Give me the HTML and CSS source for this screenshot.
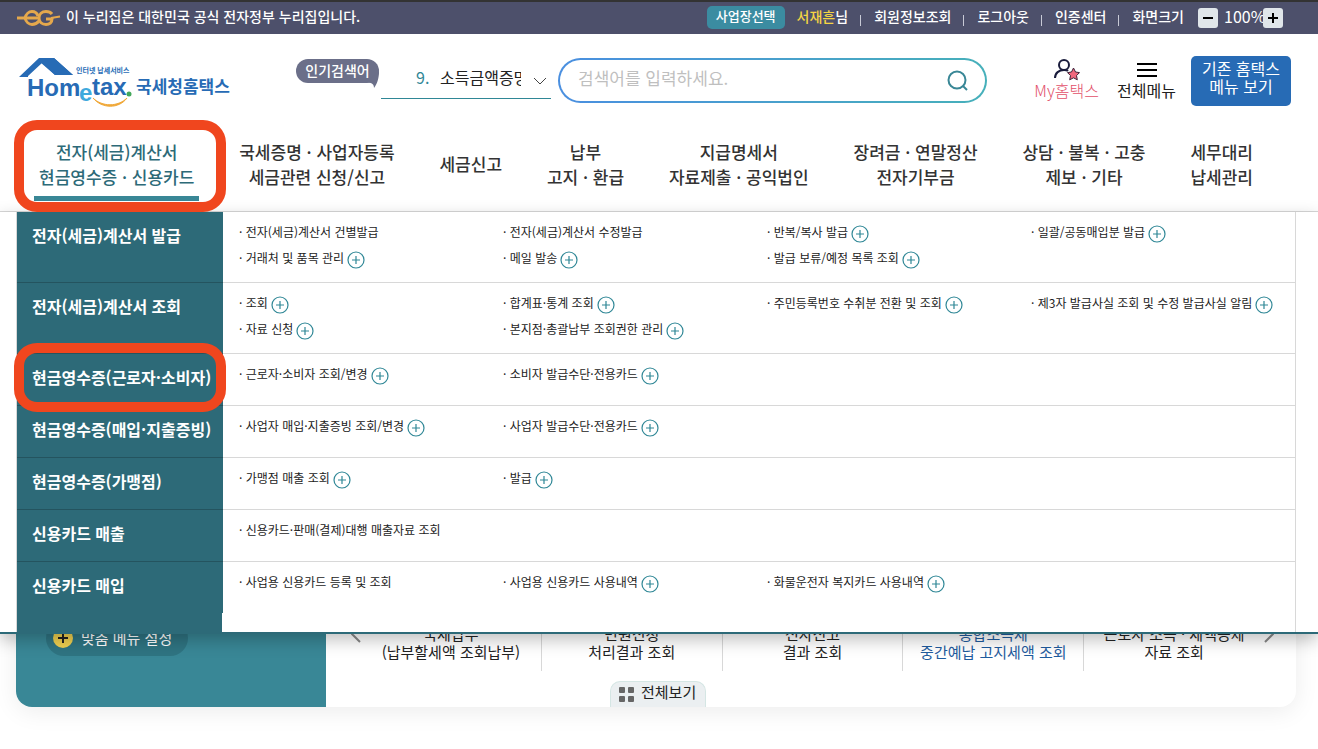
FILE: index.html
```html
<!DOCTYPE html>
<html lang="ko">
<head>
    <meta charset="UTF-8">
    <meta name="viewport" content="width=device-width, initial-scale=1.0">
    <title>국세청 홈택스</title>
    <link rel="stylesheet" href="styles.css">
</head>
<body>
    <!-- Icon shared by the menu links -->
    <svg class="sprite" width="0" height="0" aria-hidden="true">
        <symbol id="plus" viewBox="0 0 18 18">
            <circle cx="9" cy="9" r="8" fill="none" stroke="#2f8796" stroke-width="1.2"/>
            <path d="M5 9h8M9 5v8" stroke="#2f8796" stroke-width="1.2"/>
        </symbol>
    </svg>

    <!-- Top bar -->
    <div class="topbar">
        <div class="gov">
            <svg width="44" height="18" viewBox="0 0 44 18" fill="none" stroke="#e5a84c" stroke-width="3" aria-hidden="true">
                <path d="M0 9h21"/>
                <path d="M21 7C20 4 18 2.500 15 2.500S9 5 8 9c1 4 4 6.500 7 6.500c3 0 5-1 7-3.500"/>
                <path d="M35 5c-1.500-2-3.500-2.500-6-2.500-4 0-7 2.500-7 6.500s3 6.500 7 6.500c3.500 0 6-2 6-5.500h-6"/>
                <path d="M34 9l9-1.500" stroke-width="2"/>
            </svg>
            <span>이 누리집은 대한민국 공식 전자정부 누리집입니다.</span>
        </div>
        <div class="util">
            <button type="button" class="biz">사업장선택</button>
            <span class="user"><b>서재흔</b>님</span>
            <a href="#">회원정보조회</a>
            <a href="#">로그아웃</a>
            <a href="#">인증센터</a>
            <span class="util-label">화면크기</span>
            <div class="zoom">
                <button type="button" aria-label="축소"><svg width="12" height="12" viewBox="0 0 12 12" stroke="#000" stroke-width="2"><path d="M1 6h10"/></svg></button>
                <span>100%</span>
                <button type="button" aria-label="확대"><svg width="12" height="12" viewBox="0 0 12 12" stroke="#000" stroke-width="2"><path d="M1 6h10M6 1v10"/></svg></button>
            </div>
        </div>
    </div>

    <!-- Header: logo, search and shortcuts -->
    <header class="header">
        <a href="#" class="logo" aria-label="국세청홈택스">
            <svg width="212" height="52" viewBox="0 0 212 52">
                <path d="M0 19L20 0h15l19 17H36L23 5 9 18v1z" fill="#276bb5"/>
                <path d="M36 17L21 4l6-4h8l19 17z" fill="#276bb5"/>
                <text x="8" y="38" class="logo-en">Hom</text>
                <text x="60" y="43" class="logo-e">e</text>
                <text x="73" y="37" class="logo-en">tax</text>
                <circle cx="110" cy="36" r="2.500" fill="#43a85a"/>
                <path d="M74 40c9 9 25 9 34 0-8 11-25 11-34 0z" fill="#f0a838" stroke="#f0a838"/>
                <text x="57" y="15" class="logo-sub">인터넷 납세서비스</text>
                <text x="117" y="35" class="logo-ko">국세청홈택스</text>
            </svg>
        </a>
        <div class="popular">
            <strong class="popular-badge">인기검색어
                <svg width="12" height="17" viewBox="0 0 12 17" aria-hidden="true"><path d="M12 0c0 8-2 13-5 17 0-3-1-5-7-6z" fill="#6b6f89"/></svg>
            </strong>
            <div class="keyword">
                <span class="rank">9.</span>
                <a href="#">소득금액증명</a>
                <button type="button" aria-label="인기검색어 펼치기"><svg width="14" height="8" viewBox="0 0 14 8" fill="none" stroke="#444"><path d="M1 1l6 6 6-6"/></svg></button>
            </div>
        </div>
        <form class="search">
            <input type="text" aria-label="검색어" placeholder="검색어를 입력하세요.">
            <button type="submit" aria-label="검색"><svg width="22" height="22" viewBox="0 0 22 22" fill="none" stroke="#398796" stroke-width="2"><circle cx="10" cy="10" r="8.500"/><path d="M16 16l4 4"/></svg></button>
        </form>
        <a href="#" class="shortcut my">
            <svg width="26" height="22" viewBox="0 0 26 22" fill="none" stroke="#1a1c3c" stroke-width="2" aria-hidden="true">
                <circle cx="10" cy="6" r="5"/>
                <path d="M1 19c0-5 4-8 9-8 2 0 3 0 4 1"/>
                <path d="M19.500 9l2 4 4 .600-3 3 .800 4.200-3.800-2-3.800 2 .800-4.200-3-3 4-.600z" fill="#f0687d" stroke="#3c2238" stroke-width="1"/>
            </svg>
            My홈택스
        </a>
        <a href="#" class="shortcut">
            <svg width="20" height="22" viewBox="0 0 20 22" stroke="#000" stroke-width="2" aria-hidden="true"><path d="M0 5h20M0 11h20M0 17h20"/></svg>
            전체메뉴
        </a>
        <button type="button" class="old-site">기존 홈택스<br>메뉴 보기</button>
    </header>

    <!-- Main navigation -->
    <nav class="gnb">
        <ul class="gnb-list">
            <li class="active marked"><a href="#">전자(세금)계산서<br>현금영수증 · 신용카드</a></li>
            <li><a href="#">국세증명 · 사업자등록<br>세금관련 신청/신고</a></li>
            <li><a href="#">세금신고</a></li>
            <li><a href="#">납부<br>고지 · 환급</a></li>
            <li><a href="#">지급명세서<br>자료제출 · 공익법인</a></li>
            <li><a href="#">장려금 · 연말정산<br>전자기부금</a></li>
            <li><a href="#">상담 · 불복 · 고충<br>제보 · 기타</a></li>
            <li><a href="#">세무대리<br>납세관리</a></li>
        </ul>

        <!-- Open submenu -->
        <div class="mega">
            <div class="mega-inner">
                <section class="row">
                    <h2>전자(세금)계산서 발급</h2>
                    <ul>
                        <li><a href="#">· 전자(세금)계산서 건별발급</a></li>
                        <li><a href="#">· 전자(세금)계산서 수정발급</a></li>
                        <li><a href="#">· 반복/복사 발급<svg class="plus"><use href="#plus"/></svg></a></li>
                        <li><a href="#">· 일괄/공동매입분 발급<svg class="plus"><use href="#plus"/></svg></a></li>
                        <li><a href="#">· 거래처 및 품목 관리<svg class="plus"><use href="#plus"/></svg></a></li>
                        <li><a href="#">· 메일 발송<svg class="plus"><use href="#plus"/></svg></a></li>
                        <li><a href="#">· 발급 보류/예정 목록 조회<svg class="plus"><use href="#plus"/></svg></a></li>
                    </ul>
                </section>
                <section class="row">
                    <h2>전자(세금)계산서 조회</h2>
                    <ul>
                        <li><a href="#">· 조회<svg class="plus"><use href="#plus"/></svg></a></li>
                        <li><a href="#">· 합계표·통계 조회<svg class="plus"><use href="#plus"/></svg></a></li>
                        <li><a href="#">· 주민등록번호 수취분 전환 및 조회<svg class="plus"><use href="#plus"/></svg></a></li>
                        <li><a href="#">· 제3자 발급사실 조회 및 수정 발급사실 알림<svg class="plus"><use href="#plus"/></svg></a></li>
                        <li><a href="#">· 자료 신청<svg class="plus"><use href="#plus"/></svg></a></li>
                        <li><a href="#">· 본지점·총괄납부 조회권한 관리<svg class="plus"><use href="#plus"/></svg></a></li>
                    </ul>
                </section>
                <section class="row">
                    <h2 class="marked">현금영수증(근로자·소비자)</h2>
                    <ul>
                        <li><a href="#">· 근로자·소비자 조회/변경<svg class="plus"><use href="#plus"/></svg></a></li>
                        <li><a href="#">· 소비자 발급수단·전용카드<svg class="plus"><use href="#plus"/></svg></a></li>
                    </ul>
                </section>
                <section class="row">
                    <h2>현금영수증(매입·지출증빙)</h2>
                    <ul>
                        <li><a href="#">· 사업자 매입·지출증빙 조회/변경<svg class="plus"><use href="#plus"/></svg></a></li>
                        <li><a href="#">· 사업자 발급수단·전용카드<svg class="plus"><use href="#plus"/></svg></a></li>
                    </ul>
                </section>
                <section class="row">
                    <h2>현금영수증(가맹점)</h2>
                    <ul>
                        <li><a href="#">· 가맹점 매출 조회<svg class="plus"><use href="#plus"/></svg></a></li>
                        <li><a href="#">· 발급<svg class="plus"><use href="#plus"/></svg></a></li>
                    </ul>
                </section>
                <section class="row">
                    <h2>신용카드 매출</h2>
                    <ul>
                        <li><a href="#">· 신용카드·판매(결제)대행 매출자료 조회</a></li>
                    </ul>
                </section>
                <section class="row">
                    <h2>신용카드 매입</h2>
                    <ul>
                        <li><a href="#">· 사업용 신용카드 등록 및 조회</a></li>
                        <li><a href="#">· 사업용 신용카드 사용내역<svg class="plus"><use href="#plus"/></svg></a></li>
                        <li><a href="#">· 화물운전자 복지카드 사용내역<svg class="plus"><use href="#plus"/></svg></a></li>
                    </ul>
                </section>
            </div>
        </div>
    </nav>

    <!-- Quick menu panel behind the submenu -->
    <main class="panel">
        <div class="panel-side">
            <button type="button" class="custom-menu">
                <svg width="20" height="20" viewBox="0 0 20 20" aria-hidden="true"><circle cx="10" cy="10" r="10" fill="#f0d050"/><path d="M5 10h10M10 5v10" stroke="#222" stroke-width="2"/></svg>
                맞춤 메뉴 설정
            </button>
        </div>
        <div class="quick">
            <button type="button" class="arrow" aria-label="이전"><svg width="10" height="18" viewBox="0 0 10 18" fill="none" stroke="#888" stroke-width="2"><path d="M9 1L1 9l8 8"/></svg></button>
            <ul class="quick-list">
                <li><a href="#">국세납부<br>(납부할세액 조회납부)</a></li>
                <li><a href="#">민원신청<br>처리결과 조회</a></li>
                <li><a href="#">전자신고<br>결과 조회</a></li>
                <li><a href="#" class="blue">종합소득세<br>중간예납 고지세액 조회</a></li>
                <li><a href="#">근로자 소득 · 세액공제<br>자료 조회</a></li>
            </ul>
            <button type="button" class="arrow" aria-label="다음"><svg width="10" height="18" viewBox="0 0 10 18" fill="none" stroke="#888" stroke-width="2"><path d="M1 1l8 8-8 8"/></svg></button>
        </div>
        <button type="button" class="view-all">
            <svg width="16" height="16" viewBox="0 0 16 16" fill="#666" aria-hidden="true"><rect width="6" height="6" rx="1"/><rect x="9" width="6" height="6" rx="1"/><rect y="9" width="6" height="6" rx="1"/><rect x="9" y="9" width="6" height="6" rx="1"/></svg>
            전체보기
        </button>
    </main>
</body>
</html>
```
FILE: styles.css
```css
* {
    box-sizing: border-box;
}

body {
    min-height: 100vh;
    margin: 0;
    background-color: #fff;
    color: #222;
    font-family: "Noto Sans CJK KR", sans-serif;
    font-size: 16px;
}

ul {
    list-style: none;
    margin: 0;
    padding: 0;
}

a {
    color: inherit;
    text-decoration: none;
}

button {
    border: none;
    padding: 0;
    background: none;
    color: inherit;
    font: inherit;
    cursor: pointer;
}

svg {
    display: block;
    flex: none;
}

.sprite {
    position: absolute;
}

/* Top bar */
.topbar {
    display: flex;
    justify-content: space-between;
    align-items: center;
    height: 34px;
    padding: 0 35px 0 17px;
    border-top: 2px solid #333;
    background-color: #4d506b;
    color: #fff;
    font-size: 14px;
    font-weight: 500;
    line-height: 20px;
}

.gov {
    display: flex;
    align-items: center;
    gap: 5px;
}

.gov span {
    padding-bottom: 5px;
}

.util {
    display: flex;
    align-items: center;
    padding-bottom: 2px;
}

.biz {
    height: 23px;
    margin-right: 12px;
    padding: 0 9px 2px;
    border-radius: 5px;
    background-color: #3b8ca1;
    font-size: 13px;
    line-height: 20px;
}

.user,
.util a,
.util-label {
    padding-bottom: 3px;
}

.user b {
    color: #f5d444;
    font-weight: 500;
}

.util a::before,
.util-label::before {
    content: "";
    display: inline-block;
    width: 1px;
    height: 11px;
    margin: 0 13px 0 12px;
    background-color: #c8cad6;
    vertical-align: -4px;
}

.zoom {
    display: flex;
    align-items: center;
    margin-left: 14px;
    font-size: 16px;
    font-weight: 400;
}

.zoom span {
    width: 45px;
    padding: 0 0 3px 6px;
    white-space: nowrap;
}

.zoom button {
    display: flex;
    justify-content: center;
    align-items: center;
    width: 20px;
    height: 20px;
    margin-top: 2px;
    border-radius: 3px;
    background-color: #e0e6ea;
}

/* Header */
.header {
    display: flex;
    align-items: flex-start;
    height: 86px;
    padding: 22px 27px 0 19px;
}

.logo {
    margin: 2px 65px 0 0;
}

.logo text {
    fill: #276bb5;
    font-weight: 700;
}

.logo .logo-en {
    font-family: "Liberation Sans", sans-serif;
    font-size: 24px;
}

.logo .logo-e {
    font-family: "Liberation Sans", sans-serif;
    font-size: 24px;
    fill: #3fa9dd;
}

.logo .logo-sub {
    font-size: 7px;
}

.logo .logo-ko {
    font-size: 17px;
}

/* Popular keywords */
.popular {
    display: flex;
    align-items: flex-start;
    gap: 2px;
    margin: 2px 7px 0 0;
}

.popular-badge {
    position: relative;
    width: 83px;
    height: 24px;
    margin-top: 1px;
    border-radius: 12px;
    background-color: #6b6f89;
    color: #fff;
    font-size: 14px;
    font-weight: 500;
    line-height: 22px;
    text-align: center;
}

.popular-badge svg {
    position: absolute;
    top: 12px;
    right: 0;
}

.keyword {
    display: flex;
    align-items: center;
    width: 170px;
    height: 41px;
    padding: 0 4px 2px 35px;
    border-bottom: 1px solid #2f8796;
}

.rank {
    width: 24px;
    color: #2f8796;
}

.keyword a {
    flex: 1;
    overflow: hidden;
    white-space: nowrap;
}

.keyword button {
    margin: 8px 0 0 12px;
}

/* Search */
.search {
    display: flex;
    flex: 1;
    align-items: center;
    height: 45px;
    margin: 2px 46px 0 0;
    padding-right: 16px;
    border: 2px solid transparent;
    border-radius: 23px;
    background: linear-gradient(#fff, #fff) padding-box, linear-gradient(90deg, #4a8fe0, #46b0ba) border-box;
}

.search input {
    flex: 1;
    min-width: 0;
    height: 40px;
    padding: 0 18px 6px;
    border: none;
    outline: none;
    background: none;
    font: inherit;
    font-size: 17px;
}

.search input::placeholder {
    color: #bfbfbf;
}

.shortcut {
    display: flex;
    flex-direction: column;
    align-items: center;
    margin: 3px 15px 0 0;
    line-height: 18px;
}

.my {
    min-width: 67px;
    margin-right: 17px;
    color: #e2506a;
    font-weight: 300;
}

.old-site {
    width: 100px;
    height: 50px;
    padding-bottom: 8px;
    border-radius: 5px;
    background-color: #276bb5;
    color: #fff;
    line-height: 18px;
}

/* Main navigation */
.gnb {
    position: relative;
    z-index: 1;
    border-bottom: 1px solid #d8d8d8;
}

.gnb-list {
    display: flex;
    justify-content: space-between;
    align-items: center;
    height: 91px;
    padding: 0 65px 4px 39px;
    color: #333;
    font-size: 17px;
    font-weight: 500;
    line-height: 25px;
    text-align: center;
}

.gnb-list li {
    position: relative;
}

.gnb-list .active {
    color: #2d6a78;
}

.active a::after {
    content: "";
    position: absolute;
    right: -5px;
    bottom: -12px;
    left: -5px;
    height: 5px;
    background-color: #398796;
}

/* Red frame round a menu entry */
.marked::before {
    content: "";
    position: absolute;
    z-index: 2;
    border: 10px solid #f0461e;
    border-radius: 23px;
}

.gnb-list .marked::before {
    inset: -19px -32px -23px -25px;
}

/* Submenu */
.mega {
    position: absolute;
    top: 92px;
    right: 0;
    left: 0;
    border-bottom: 2px solid #2d6a78;
    background-color: #fff;
    box-shadow: 0 6px 16px rgba(0, 0, 0, 0.25);
}

.mega-inner {
    margin: 0 22px 0 16px;
    padding-bottom: 20px;
    border: 1px solid #d8d8d8;
    border-width: 0 1px;
    background: linear-gradient(#2d6a78, #2d6a78) left / 205px 100% no-repeat;
}

.row {
    display: flex;
    min-height: 52px;
    border-bottom: 1px solid #d8d8d8;
}

.row:last-child {
    min-height: 50px;
    border-bottom: none;
}

.row h2 {
    position: relative;
    width: 206px;
    margin: 0 0 -1px;
    padding: 11px 0 0 15px;
    border-bottom: 1px solid #24545f;
    background-color: #2d6a78;
    color: #fff;
    font-size: 16px;
    font-weight: 700;
    line-height: 24px;
    white-space: nowrap;
}

.row:last-child h2 {
    border-bottom: none;
}

.row .marked::before {
    inset: -11px -3px -7px -3px;
}

.row ul {
    display: grid;
    flex: 1;
    grid-template-columns: repeat(4, 1fr);
    grid-auto-rows: 26px;
    padding: 7px 0 11px 16px;
    font-size: 12px;
    line-height: 26px;
}

.row:last-child ul {
    padding-bottom: 8px;
}

.row a {
    display: flex;
    align-items: center;
    gap: 3px;
    white-space: nowrap;
}

.plus {
    width: 18px;
    height: 18px;
    margin-top: 3px;
}

/* Quick menu panel */
.panel {
    position: relative;
    display: flex;
    min-height: 471px;
    margin: 24px 22px 0 16px;
    border-radius: 16px;
    background-color: #fff;
    box-shadow: 0 4px 24px rgba(0, 0, 0, 0.08);
}

.panel-side {
    display: flex;
    align-items: flex-end;
    width: 310px;
    padding: 0 30px 51px;
    border-radius: 0 0 0 16px;
    background-color: #398796;
}

.custom-menu {
    display: flex;
    align-items: center;
    gap: 8px;
    height: 36px;
    padding: 0 16px 0 7px;
    border-radius: 18px;
    background-color: #2f7482;
    color: #fff;
    font-size: 15px;
    line-height: 32px;
}

.quick {
    display: flex;
    flex: 1;
    align-items: flex-end;
    padding: 0 22px 36px 25px;
}

.arrow {
    margin-bottom: 28px;
}

.quick-list {
    display: flex;
    flex: 1;
    font-size: 15px;
    line-height: 18px;
    text-align: center;
}

.quick-list li {
    flex: 1 0 0;
    padding: 40px 0 10px;
    white-space: nowrap;
}

.quick-list li + li {
    border-left: 1px solid #d8d8d8;
}

.blue {
    color: #1f5c9e;
}

.view-all {
    position: absolute;
    bottom: 0;
    left: calc(50% - 46px);
    display: flex;
    gap: 6px;
    width: 96px;
    height: 26px;
    padding: 0 8px;
    border: 1px solid #d5e6e4;
    border-bottom: none;
    border-radius: 10px 10px 0 0;
    background-color: #ebeff1;
    font-size: 15px;
    line-height: 20px;
    white-space: nowrap;
}

.view-all svg {
    margin-top: 5px;
}
```
